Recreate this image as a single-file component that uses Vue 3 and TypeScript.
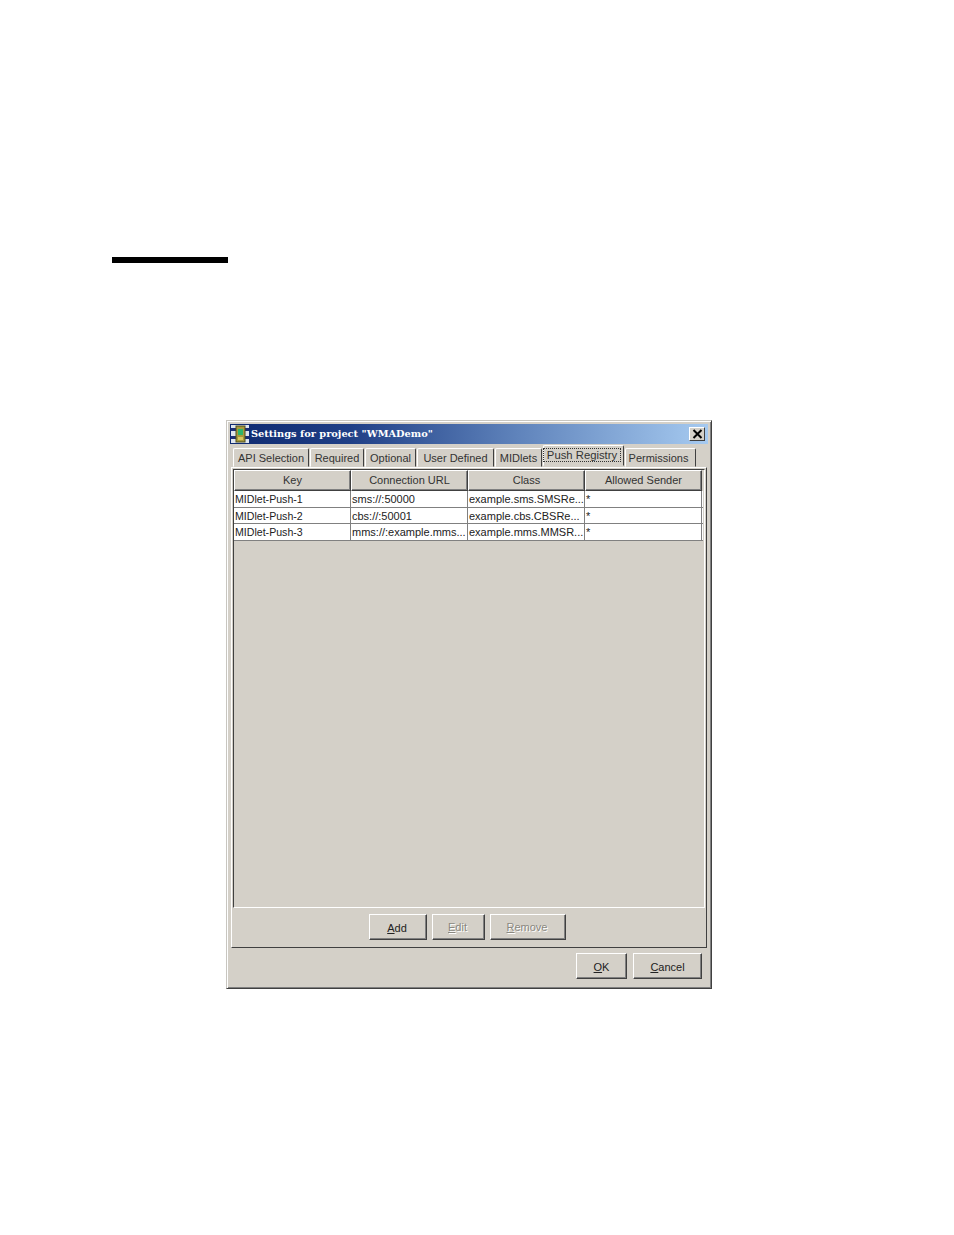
<script setup lang="ts">
const columns = ['Key', 'Connection URL', 'Class', 'Allowed Sender']
const rows = [
  ['MIDlet-Push-1', 'sms://:50000', 'example.sms.SMSRe...', '*'],
  ['MIDlet-Push-2', 'cbs://:50001', 'example.cbs.CBSRe...', '*'],
  ['MIDlet-Push-3', 'mms://:example.mms...', 'example.mms.MMSR...', '*'],
]
const tabs = [
  { label: 'API Selection', width: 76 },
  { label: 'Required', width: 54 },
  { label: 'Optional', width: 51 },
  { label: 'User Defined', width: 77 },
  { label: 'MIDlets', width: 47 },
  { label: 'Push Registry', width: 81, active: true },
  { label: 'Permissions', width: 71 },
]
</script>

<template>
  <div class="page">
    <div class="rule"></div>
    <div class="window">
      <div class="titlebar">
        <svg class="app-icon" width="18" height="18" viewBox="0 0 18 18">
          <rect width="18" height="18" fill="#dfe6ee" />
          <rect x="0" y="3" width="18" height="3" fill="#1d2f74" />
          <rect x="0" y="11" width="18" height="3" fill="#1d2f74" />
          <rect x="5" y="1" width="9" height="16" fill="#a89a3c" stroke="#4b4a1c" />
          <rect x="7" y="4" width="5" height="6" fill="#2fb56a" />
          <rect x="7" y="12" width="5" height="3" fill="#d8c860" />
        </svg>
        <span class="title">Settings for project "WMADemo"</span>
        <button class="close">
          <svg width="11" height="10" viewBox="0 0 11 10">
            <path d="M1.5 1 L9.5 9 M9.5 1 L1.5 9" stroke="#000" stroke-width="2" fill="none" />
          </svg>
        </button>
      </div>
      <div class="tabs">
        <div
          v-for="tab in tabs"
          :key="tab.label"
          class="tab"
          :class="{ active: tab.active }"
          :style="{ width: tab.width + 'px' }"
        >
          <span :class="{ focus: tab.active }">{{ tab.label }}</span>
        </div>
      </div>
      <div class="panel">
        <div class="table-area">
          <div class="table-row head">
            <div v-for="c in columns" :key="c" class="th">{{ c }}</div>
          </div>
          <div v-for="r in rows" :key="r[0]" class="table-row body-row">
            <div v-for="(cell, i) in r" :key="i" class="td">{{ cell }}</div>
          </div>
        </div>
        <div class="panel-actions">
          <button class="btn add"><u>A</u>dd</button>
          <button class="btn edit off"><u>E</u>dit</button>
          <button class="btn remove off"><u>R</u>emove</button>
        </div>
      </div>
      <div class="footer">
        <button class="btn ok"><u>O</u>K</button>
        <button class="btn cancel"><u>C</u>ancel</button>
      </div>
    </div>
  </div>
</template>

<style>
html, body { background: #fff; }
</style>

<style scoped>
.page {
  width: 954px;
  height: 1235px;
  padding-top: 257px;
  box-sizing: border-box;
  background: #fff;
  font-family: "Liberation Sans", Arial, sans-serif;
  overflow: hidden;
}
.rule {
  width: 116px;
  height: 6px;
  margin-left: 112px;
  background: #000;
}
.window {
  width: 486px;
  height: 569px;
  margin: 157px 0 0 226px;
  box-sizing: border-box;
  padding: 3px;
  background: #d4d0c8;
  border: 1px solid;
  border-color: #c8c6c0 #404040 #404040 #c8c6c0;
  box-shadow: inset 1px 1px 0 #fff, inset -1px -1px 0 #808080;
  display: flex;
  flex-direction: column;
}
.titlebar {
  height: 20px;
  flex: none;
  display: flex;
  align-items: center;
  padding: 0 3px 0 1px;
  background: linear-gradient(90deg, #0f2a70 0%, #1f3f86 25%, #5f83bb 60%, #a6caf0 100%);
  color: #fff;
}
.app-icon { flex: none; }
.title {
  margin-left: 2px;
  margin-top: -2px;
  font-family: "DejaVu Serif", "Liberation Serif", serif;
  font-weight: 700;
  font-size: 9.8px;
  white-space: nowrap;
}
.close {
  margin-left: auto;
  width: 16px;
  height: 14px;
  padding: 0;
  display: flex;
  align-items: center;
  justify-content: center;
  background: #d4d0c8;
  border: 1px solid;
  border-color: #fff #404040 #404040 #fff;
}
.tabs {
  height: 23px;
  flex: none;
  display: flex;
  align-items: flex-end;
  gap: 1px;
  padding-left: 3px;
}
.tab {
  height: 19px;
  box-sizing: border-box;
  display: flex;
  align-items: center;
  justify-content: center;
  flex: none;
  font-size: 11px;
  color: #333;
  white-space: nowrap;
  border: 1px solid;
  border-color: #fff #404040 transparent #fff;
  border-radius: 2px 2px 0 0;
}
.tab:last-child { padding-right: 4px; }
.tab.active {
  height: 21px;
  margin-bottom: 1px;
  padding-bottom: 1px;
  padding-right: 3px;
  font-size: 11.3px;
}
.focus {
  outline: 1px dotted #333;
  outline-offset: 0;
  padding: 0 3px;
}
.panel {
  width: 476px;
  height: 481px;
  margin-left: 1px;
  flex: none;
  box-sizing: border-box;
  border: 1px solid;
  border-color: #fff #404040 #404040 #fff;
  display: flex;
  flex-direction: column;
  padding: 1px;
}
.table-area {
  height: 439px;
  flex: none;
  box-sizing: border-box;
  border: 1px solid;
  border-color: #404040 #fff #fff #404040;
  padding-right: 1px;
}
.table-row { display: grid; grid-template-columns: 117px 117px 117px 117px; }
.th {
  height: 21px;
  box-sizing: border-box;
  padding-bottom: 2px;
  display: flex;
  align-items: center;
  justify-content: center;
  font-size: 11px;
  color: #333;
  background: #d4d0c8;
  border: 1px solid;
  border-color: #fff #404040 #404040 #fff;
  box-shadow: inset -1px -1px 0 #808080;
}
.body-row {
  height: 16.6px;
  background: #fff;
  border-bottom: 1px solid #808080;
  box-sizing: border-box;
}
.td {
  padding-left: 1px;
  padding-top: 1px;
  line-height: 15px;
  font-size: 11px;
  color: #222;
  white-space: nowrap;
  overflow: hidden;
  border-right: 1px solid #808080;
  box-sizing: border-box;
}
.td:first-child { font-size: 10.6px; }
.panel-actions {
  flex: 1;
  display: flex;
  align-items: center;
  justify-content: flex-start;
  padding-left: 136px;
  gap: 5px;
}
.btn {
  height: 26px;
  padding: 2px 2px 0 0;
  box-sizing: border-box;
  font-family: inherit;
  font-size: 11px;
  color: #222;
  background: #d4d0c8;
  border: 1px solid;
  border-color: #fff #404040 #404040 #fff;
  box-shadow: inset -1px -1px 0 #808080;
}
.off { color: #8a8880; text-shadow: 1px 1px 0 #fff; padding-top: 0; }
.add { width: 58px; }
.edit { width: 53px; }
.remove { width: 76px; }
.ok { width: 51px; padding-right: 0; }
.cancel { width: 69px; padding-right: 0; }
.footer {
  flex: 1;
  display: flex;
  align-items: flex-start;
  justify-content: flex-end;
  gap: 6px;
  padding: 5px 6px 0 0;
}
</style>
